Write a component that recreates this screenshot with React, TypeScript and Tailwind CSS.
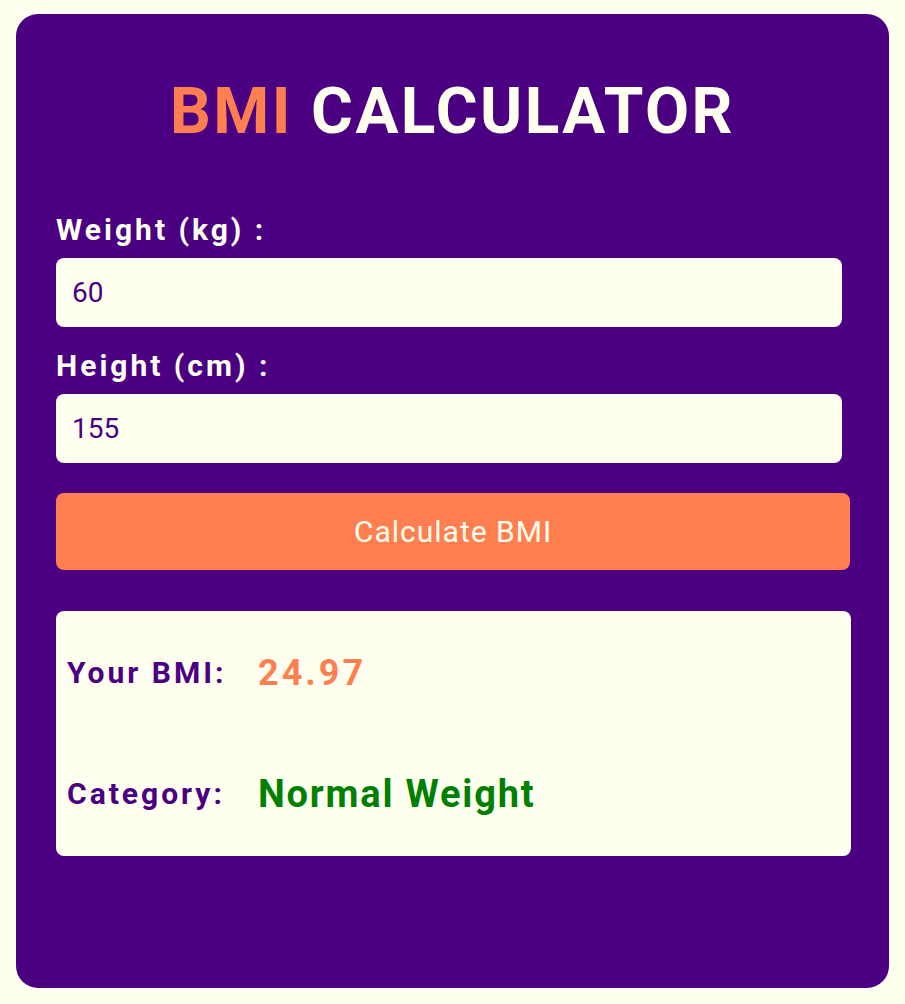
import React, { useState } from "react";

export default function App() {
  const [weight, setWeight] = useState("60");
  const [height, setHeight] = useState("155");
  const [bmi, setBmi] = useState("24.97");
  const [category, setCategory] = useState("Normal Weight");

  const onCalculate = () => {
    const w = parseFloat(weight);
    const h = parseFloat(height) / 100;
    if (!w || !h) return;
    const value = w / (h * h);
    setBmi(value.toFixed(2));
    if (value < 18.5) setCategory("Underweight");
    else if (value < 25) setCategory("Normal Weight");
    else if (value < 30) setCategory("Overweight");
    else setCategory("Obese");
  };

  const fields = [
    { label: "Weight (kg) :", value: weight, setter: setWeight },
    { label: "Height (cm) :", value: height, setter: setHeight },
  ];

  return (
    <div className="min-h-screen w-full bg-[#fffff0] px-4 pt-[14px] pb-4 font-['Roboto',sans-serif]">
      <div className="h-[974px] rounded-[22px] bg-[#4b0082] px-10 pt-[56px]">
        <h1 className="text-center text-[64px] font-bold leading-[84px] tracking-[2.4px] text-[#fffff0]">
          <span className="text-[#ff7f50]">BMI</span> CALCULATOR
        </h1>

        <div className="mt-[58px] flex flex-col">
          {fields.map(({ label, value, setter }, i) => (
            <div key={label} className={i > 0 ? "mt-[21px]" : ""}>
              <label className="block text-[30px] font-bold leading-[36px] tracking-[3px] text-[#fffff0]">
                {label}
              </label>
              <input
                type="number"
                value={value}
                onChange={(e) => setter(e.currentTarget.value)}
                className="mt-[10px] h-[69px] w-[786px] rounded-lg bg-[#fffff0] px-4 text-[28px] text-[#4b0082] outline-none [appearance:textfield]"
              />
            </div>
          ))}

          <button
            onClick={onCalculate}
            className="mt-[30px] h-[77px] w-[794px] rounded-lg bg-[#ff7f50] text-[30px] tracking-[1px] text-[#fffff0]"
          >
            Calculate BMI
          </button>

          <div className="mt-[41px] flex h-[245px] w-[795px] flex-col justify-between rounded-lg bg-[#fffff0] px-[11px] py-[40px]">
            <div className="flex h-[44px] items-center">
              <span className="w-[191px] text-[30px] font-bold leading-[44px] tracking-[3px] text-[#4b0082]">
                Your BMI:
              </span>
              <span className="text-[36px] font-bold leading-[44px] tracking-[3px] text-[#ff7f50]">
                {bmi}
              </span>
            </div>
            <div className="flex h-[44px] items-center">
              <span className="w-[191px] text-[30px] font-bold leading-[44px] tracking-[3px] text-[#4b0082]">
                Category:
              </span>
              <span className="text-[38px] font-bold leading-[44px] tracking-[1.8px] text-[#008000]">
                {category}
              </span>
            </div>
          </div>
        </div>
      </div>
    </div>
  );
}
